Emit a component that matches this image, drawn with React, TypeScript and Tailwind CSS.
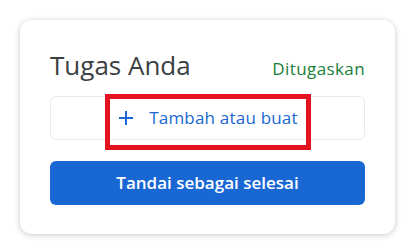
export default function App() {
  return (
    <div className="w-[413px] h-[252px] bg-white pt-5 pl-5 font-['Open_Sans',sans-serif]">
      <div className="w-[375px] h-[214px] rounded-xl bg-white shadow-[0_1px_6px_rgba(0,0,0,0.22)] px-[30px] pt-[29px]">
        <div className="flex items-baseline justify-between">
          <h2 className="text-[26px] leading-[32px] text-[#3c4043]">Tugas Anda</h2>
          <span className="text-[17px] tracking-[0.4px] text-[#188038]">Ditugaskan</span>
        </div>
        <div className="relative mt-[14px]">
          <button className="w-full h-[44px] rounded-md border border-[#e8eaed] flex items-center justify-center gap-4 text-[#1967d2]">
            <svg width="14" height="14" viewBox="0 0 14 14" className="ml-[2px]">
              <path d="M7 0v14M0 7h14" stroke="#1967d2" strokeWidth="2" />
            </svg>
            <span className="text-[17px] tracking-[0.2px]">Tambah atau buat</span>
          </button>
          <div className="absolute left-[55px] top-[-2px] w-[206px] h-[56px] border-[5px] border-[#e3141f]" />
        </div>
        <button className="mt-[21px] w-full h-[44px] rounded-md bg-[#1967d2] text-white text-[17px] font-semibold">
          Tandai sebagai selesai
        </button>
      </div>
    </div>
  );
}
